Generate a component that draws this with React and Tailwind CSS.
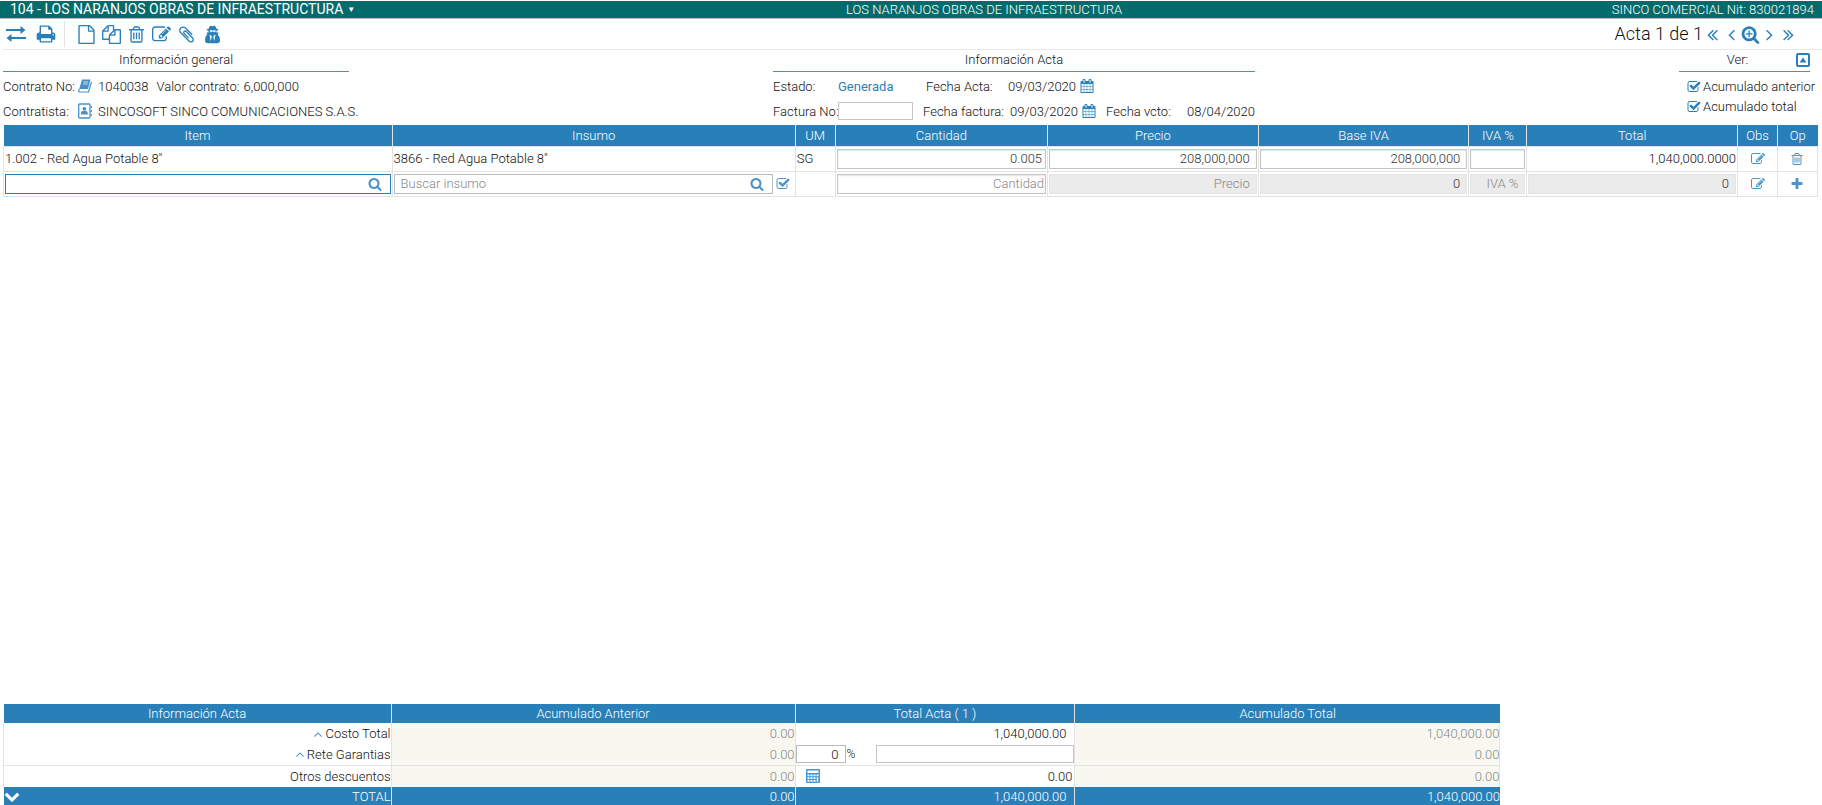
import React, { useState } from "react";

const ICONS = {
  angleLeft:
    "M1203 544q0 13-10 23l-393 393 393 393q10 10 10 23t-10 23l-50 50q-10 10-23 10t-23-10l-466-466q-10-10-10-23t10-23l466-466q10-10 23-10t23 10l50 50q10 10 10 23z",
  angleRight:
    "M1171 960q0 13-10 23l-466 466q-10 10-23 10t-23-10l-50-50q-10-10-10-23t10-23l393-393-393-393q-10-10-10-23t10-23l50-50q10-10 23-10t23 10l466 466q10 10 10 23z",
  angleUp:
    "M1395 1184q0 13-10 23l-50 50q-10 10-23 10t-23-10l-393-393-393 393q-10 10-23 10t-23-10l-50-50q-10-10-10-23t10-23l466-466q10-10 23-10t23 10l466 466q10 10 10 23z",
  doubleLeft:
    "M1011 1376q0 13-10 23l-50 50q-10 10-23 10t-23-10l-466-466q-10-10-10-23t10-23l466-466q10-10 23-10t23 10l50 50q10 10 10 23t-10 23l-393 393 393 393q10 10 10 23zm384 0q0 13-10 23l-50 50q-10 10-23 10t-23-10l-466-466q-10-10-10-23t10-23l466-466q10-10 23-10t23 10l50 50q10 10 10 23t-10 23l-393 393 393 393q10 10 10 23z",
  doubleRight:
    "M979 960q0 13-10 23l-466 466q-10 10-23 10t-23-10l-50-50q-10-10-10-23t10-23l393-393-393-393q-10-10-10-23t10-23l50-50q10-10 23-10t23 10l466 466q10 10 10 23zm384 0q0 13-10 23l-466 466q-10 10-23 10t-23-10l-50-50q-10-10-10-23t10-23l393-393-393-393q-10-10-10-23t10-23l50-50q10-10 23-10t23 10l466 466q10 10 10 23z",
  search:
    "M1216 832q0-185-131.5-316.5t-316.5-131.5-316.5 131.5-131.5 316.5 131.5 316.5 316.5 131.5 316.5-131.5 131.5-316.5zm512 832q0 52-38 90t-90 38q-54 0-90-38l-343-342q-179 124-399 124-143 0-273.5-55.5t-225-150-150-225-55.5-273.5 55.5-273.5 150-225 225-150 273.5-55.5 273.5 55.5 225 150 150 225 55.5 273.5q0 220-124 399l343 343q37 37 37 90z",
  searchPlus:
    "M1088 800v64q0 13-9.5 22.5t-22.5 9.5h-224v224q0 13-9.5 22.5t-22.5 9.5h-64q-13 0-22.5-9.5t-9.5-22.5v-224h-224q-13 0-22.5-9.5t-9.5-22.5v-64q0-13 9.5-22.5t22.5-9.5h224v-224q0-13 9.5-22.5t22.5-9.5h64q13 0 22.5 9.5t9.5 22.5v224h224q13 0 22.5 9.5t9.5 22.5zm128 32q0-185-131.5-316.5t-316.5-131.5-316.5 131.5-131.5 316.5 131.5 316.5 316.5 131.5 316.5-131.5 131.5-316.5zm512 832q0 53-37.5 90.5t-90.5 37.5q-54 0-90-38l-343-342q-179 124-399 124-143 0-273.5-55.5t-225-150-150-225-55.5-273.5 55.5-273.5 150-225 225-150 273.5-55.5 273.5 55.5 225 150 150 225 55.5 273.5q0 220-124 399l343 343q37 37 37 90z",
  plus: "M1600 736v192q0 40-28 68t-68 28h-416v416q0 40-28 68t-68 28h-192q-40 0-68-28t-28-68v-416h-416q-40 0-68-28t-28-68v-192q0-40 28-68t68-28h416v-416q0-40 28-68t68-28h192q40 0 68 28t28 68v416h416q40 0 68 28t28 68z",
  trash:
    "M704 736v576q0 14-9 23t-23 9h-64q-14 0-23-9t-9-23v-576q0-14 9-23t23-9h64q14 0 23 9t9 23zm256 0v576q0 14-9 23t-23 9h-64q-14 0-23-9t-9-23v-576q0-14 9-23t23-9h64q14 0 23 9t9 23zm256 0v576q0 14-9 23t-23 9h-64q-14 0-23-9t-9-23v-576q0-14 9-23t23-9h64q14 0 23 9t9 23zm128 724v-948h-896v948q0 22 7 40.5t14.5 27 10.5 8.5h832q3 0 10.5-8.5t14.5-27 7-40.5zm-672-1076h448l-48-117q-7-9-17-11h-317q-10 2-17 11zm928 32v64q0 14-9 23t-23 9h-96v948q0 83-47 143.5t-113 60.5h-832q-66 0-113-58.5t-47-141.5v-952h-96q-14 0-23-9t-9-23v-64q0-14 9-23t23-9h309l70-167q15-37 54-63t79-26h320q40 0 79 26t54 63l70 167h309q14 0 23 9t9 23z",
  edit: "M888 1184l116-116-152-152-116 116v56h96v96h56zm440-720q-16-16-33 1l-350 350q-17 17-1 33t33-1l350-350q17-17 1-33zm80 594v190q0 119-84.5 203.5t-203.5 84.5h-832q-119 0-203.5-84.5t-84.5-203.5v-832q0-119 84.5-203.5t203.5-84.5h832q63 0 117 25 15 7 18 23 3 17-9 29l-49 49q-14 14-32 8-23-6-45-6h-832q-66 0-113 47t-47 113v832q0 66 47 113t113 47h832q66 0 113-47t47-113v-126q0-13 9-22l64-64q15-15 35-7t20 29zm-96-738l288 288-672 672h-288v-288zm444 132l-92 92-288-288 92-92q28-28 68-28t68 28l152 152q28 28 28 68t-28 68z",
  check:
    "M1472 930v318q0 119-84.5 203.5t-203.5 84.5h-832q-119 0-203.5-84.5t-84.5-203.5v-832q0-119 84.5-203.5t203.5-84.5h832q63 0 117 25 15 7 18 23 3 17-9 29l-49 49q-10 10-23 10-3 0-9-2-23-6-45-6h-832q-66 0-113 47t-47 113v832q0 66 47 113t113 47h832q66 0 113-47t47-113v-254q0-13 9-22l64-64q10-10 23-10 6 0 12 3 20 8 20 29zm231-489l-814 814q-24 24-57 24t-57-24l-430-430q-24-24-24-57t24-57l110-110q24-24 57-24t57 24l263 263 647-647q24-24 57-24t57 24l110 110q24 24 24 57t-24 57z",
  file: "M1596 380q28 28 48 76t20 88v1152q0 40-28 68t-68 28h-1344q-40 0-68-28t-28-68v-1600q0-40 28-68t68-28h896q40 0 88 20t76 48zm-444-244v376h376q-10-29-22-41l-313-313q-12-12-41-22zm384 1528v-1024h-416q-40 0-68-28t-28-68v-416h-768v1536h1280z",
  files:
    "M1696 384q40 0 68 28t28 68v1216q0 40-28 68t-68 28h-960q-40 0-68-28t-28-68v-288h-544q-40 0-68-28t-28-68v-672q0-40 20-88t48-76l408-408q28-28 76-48t88-20h416q40 0 68 28t28 68v328q68-40 128-40h416zm-544 213l-299 299h299v-299zm-640-384l-299 299h299v-299zm196 647l316-316v-416h-384v416q0 40-28 68t-68 28h-416v640h512v-256q0-40 20-88t48-76zm956 804v-1152h-384v416q0 40-28 68t-68 28h-416v640h896z",
  print:
    "M448 1536h896v-256h-896v256zm0-640h896v-384h-160q-40 0-68-28t-28-68v-160h-640v640zm1152 64q0-26-19-45t-45-19-45 19-19 45 19 45 45 19 45-19 19-45zm128 0v416q0 13-9.5 22.5t-22.5 9.5h-224v160q0 40-28 68t-68 28h-960q-40 0-68-28t-28-68v-160h-224q-13 0-22.5-9.5t-9.5-22.5v-416q0-79 56.5-135.5t135.5-56.5h64v-544q0-40 28-68t68-28h672q40 0 88 20t76 48l152 152q28 28 48 76t20 88v256h64q79 0 135.5 56.5t56.5 135.5z",
  calendar:
    "M192 1664h288v-288h-288v288zm352 0h320v-288h-320v288zm-352-352h288v-320h-288v320zm352 0h320v-320h-320v320zm-352-384h288v-288h-288v288zm736 736h320v-288h-320v288zm-384-736h320v-288h-320v288zm768 736h288v-288h-288v288zm-384-352h320v-320h-320v320zm-352-864v-288q0-13-9.5-22.5t-22.5-9.5h-64q-13 0-22.5 9.5t-9.5 22.5v288q0 13 9.5 22.5t22.5 9.5h64q13 0 22.5-9.5t9.5-22.5zm736 864h288v-320h-288v320zm-384-384h320v-288h-320v288zm384 0h288v-288h-288v288zm32-480v-288q0-13-9.5-22.5t-22.5-9.5h-64q-13 0-22.5 9.5t-9.5 22.5v288q0 13 9.5 22.5t22.5 9.5h64q13 0 22.5-9.5t9.5-22.5zm384-64v1280q0 52-38 90t-90 38h-1408q-52 0-90-38t-38-90v-1280q0-52 38-90t90-38h128v-96q0-66 47-113t113-47h64q66 0 113 47t47 113v96h384v-96q0-66 47-113t113-47h64q66 0 113 47t47 113v96h128q52 0 90 38t38 90z",
  chevronDown:
    "M1683 808l-742 741q-19 19-45 19t-45-19l-742-741q-19-19-19-45.5t19-45.5l166-165q19-19 45-19t45 19l531 531 531-531q19-19 45-19t45 19l166 165q19 19 19 45.5t-19 45.5z",
  paperclip:
    "M1596 1385q0 117-79 196t-196 79q-135 0-235-100l-777-776q-113-115-113-271 0-159 110-270t269-111q158 0 273 113l605 606q10 10 10 22 0 16-30.5 46.5t-46.5 30.5q-13 0-23-10l-606-607q-79-77-181-77-106 0-179 75t-73 181q0 105 76 181l776 777q63 63 145 63 64 0 106-42t42-106q0-82-63-145l-581-581q-26-24-60-24-29 0-48 19t-19 48q0 32 25 59l410 410q10 10 10 22 0 16-31 47t-47 31q-12 0-22-10l-410-410q-63-61-63-149 0-82 57-139t139-57q88 0 149 63l581 581q100 98 100 235z",
  secret:
    "M832 1536l96-448-96-128-128-64zm320 0l128-640-128 64-96 128zm153-1026q-2-4-4-6-10-8-96-8-70 0-167 19-7 2-21 2t-21-2q-97-19-167-19-86 0-96 8-2 2-4 6 2 18 4 27 2 3 7.5 6.5t7.5 10.5q2 4 7.5 20.5t7 20.5 7.5 17 8.5 17 9 14 12 13.5 14 9.5 17.5 8 20.5 4 24.5 2q36 0 59-12.5t32.5-30 14.5-34.5 11.5-29.5 17.5-12.5h12q11 0 17.5 12.5t11.5 29.5 14.5 34.5 32.5 30 59 12.5q13 0 24.5-2t20.5-4 17.5-8 14-9.5 12-13.5 9-14 8.5-17 7.5-17 7-20.5 7.5-20.5q2-7 7.5-10.5t7.5-6.5q2-9 4-27zm391 961q0 121-73 190t-194 69h-874q-121 0-194-69t-73-190q0-61 4.5-118t19-125.5 37.5-123.5 63.5-103.5 93.5-74.5l-90-220h214q-22-64-22-128 0-12 2-32-194-40-194-96 0-57 210-99 17-62 51.5-134t70.5-114q32-37 76-37 30 0 84 31t84 31 84-31 84-31q44 0 76 37 36 42 70.5 114t51.5 134q210 42 210 99 0 56-194 96 7 81-20 160h214l-82 225q63 33 107.5 96.5t65.5 143.5 29 151.5 8 148.5z",
};

function Icon({ name, className = "size-4" }) {
  return (
    <svg viewBox="0 0 1792 1792" fill="currentColor" className={className} aria-hidden="true">
      <path d={ICONS[name]} />
    </svg>
  );
}

function ExchangeIcon() {
  return (
    <svg viewBox="0 0 20 16" fill="currentColor" className="h-4 w-5" aria-hidden="true">
      <path d="M0 3h14.5V0L19.500 4l-5 4V5H0zM20 11H5.500V8L.5 12l5 4v-3H20z" />
    </svg>
  );
}

function BookIcon() {
  return (
    <svg viewBox="0 0 14 14" className="size-3.5" aria-hidden="true">
      <path d="M4 .5h8.500L10 10H1.200z" fill="currentColor" />
      <path d="M5.500 3h4.500M5 5h4.500" stroke="#fff" strokeWidth=".7" />
      <path d="M1.200 10Q0 13 2 13h8.500l3-10" fill="none" stroke="currentColor" strokeWidth="1.200" />
    </svg>
  );
}

function AddressBookIcon() {
  return (
    <svg viewBox="0 0 14 16" className="h-4 w-3.5" aria-hidden="true">
      <rect x=".7" y="1" width="11.300" height="14" rx="1" fill="none" stroke="currentColor" strokeWidth="1.300" />
      <circle cx="6.400" cy="5.800" r="1.900" fill="currentColor" />
      <path d="M3 11.500V10q0-2 2-2h2.800q2 0 2 2v1.500z" fill="currentColor" />
      <path d="M13.300 3v2M13.300 7v2M13.300 11v2" stroke="currentColor" strokeWidth="1.200" />
    </svg>
  );
}

function CalculatorIcon() {
  return (
    <svg viewBox="0 0 14 14" className="size-3.5" aria-hidden="true">
      <rect width="14" height="14" rx="1" fill="currentColor" />
      <path
        d="M1.500 1.500h11v2.500h-11zM1.500 5.500h2v1.700h-2zM4.500 5.500h2v1.700h-2zM7.500 5.500h2v1.700h-2zM10.500 5.500h2v1.700h-2zM1.500 8.200h2v1.700h-2zM4.500 8.200h2v1.700h-2zM7.500 8.200h2v1.700h-2zM1.500 11h2v1.700h-2zM4.500 11h2v1.700h-2zM7.500 11h2v1.700h-2zM10.700 8.200h1.600v4.500h-1.600z"
        fill="#fff"
      />
    </svg>
  );
}

function CollapseIcon() {
  return (
    <svg viewBox="0 0 14 14" className="size-3.5" aria-hidden="true">
      <rect x="1" y="1" width="12" height="12" rx="1" fill="none" stroke="currentColor" strokeWidth="2" />
      <path d="M3.500 9.500 7 4.500l3.500 5z" fill="currentColor" />
    </svg>
  );
}

function CheckBox({ id, label, className = "text-[#2980b9]" }) {
  const [checked, setChecked] = useState(true);
  return (
    <label htmlFor={id} className="flex items-center gap-0.5">
      <input
        id={id}
        type="checkbox"
        aria-label={label || "Incluir insumo"}
        checked={checked}
        onChange={() => setChecked(!checked)}
        className="sr-only"
      />
      <span className={className}>
        <Icon name="check" className="size-3.5" />
      </span>
      {label}
    </label>
  );
}

function IconButton({ label, children, className = "" }) {
  return (
    <button type="button" aria-label={label} className={`flex shrink-0 items-center justify-center ${className}`}>
      {children}
    </button>
  );
}

const field =
  "block h-5 w-full min-w-0 border border-[#c5c5c5] bg-white px-1.5 text-right text-[#333] shadow-[inset_0_1px_2px_rgba(0,0,0,0.1)] placeholder:text-[#888]";
const disabledField =
  "block h-5 w-full min-w-0 border border-[#e4e4e4] bg-[#ebebeb] px-1.5 text-right text-[#333] placeholder:text-[#888]";
const th = "border-l border-[#e3e3e3] bg-[#2980b9] p-0 text-center font-light text-white first:border-l-0";
const td = "border border-[#e3e3e3] px-px py-0";

function ActaTable() {
  return (
    <table className="w-full table-fixed border-collapse">
      <colgroup>
        <col className="w-[21.4%]" />
        <col className="w-[22.2%]" />
        <col className="w-[2.2%]" />
        <col className="w-[11.7%]" />
        <col className="w-[11.6%]" />
        <col className="w-[11.6%]" />
        <col className="w-[3.2%]" />
        <col className="w-[11.6%]" />
        <col className="w-[2.2%]" />
        <col className="w-[2.2%]" />
      </colgroup>
      <thead>
        <tr className="h-[21px]">
          {["Item", "Insumo", "UM", "Cantidad", "Precio", "Base IVA", "IVA %", "Total", "Obs", "Op"].map((h) => (
            <th key={h} scope="col" className={th}>
              {h}
            </th>
          ))}
        </tr>
      </thead>
      <tbody>
        <tr className="h-[25px]">
          <td className={td}>1.002 - Red Agua Potable 8"</td>
          <td className={td}>3866 - Red Agua Potable 8"</td>
          <td className={td}>SG</td>
          <td className={td}>
            <input aria-label="Cantidad" defaultValue="0.005" className={`${field} pr-[3px]`} />
          </td>
          <td className={td}>
            <input aria-label="Precio" defaultValue="208,000,000" className={field} />
          </td>
          <td className={td}>
            <input aria-label="Base IVA" defaultValue="208,000,000" className={field} />
          </td>
          <td className={td}>
            <input aria-label="IVA %" className={field} />
          </td>
          <td className={`${td} text-right`}>1,040,000.0000</td>
          <td className={td}>
            <IconButton label="Observaciones" className="w-full text-[#4a96cc]">
              <Icon name="edit" className="size-3.5" />
            </IconButton>
          </td>
          <td className={td}>
            <IconButton label="Eliminar" className="w-full text-[#4a96cc]">
              <Icon name="trash" className="size-3.5" />
            </IconButton>
          </td>
        </tr>
        <tr className="h-[25px]">
          <td className={td}>
            <div className="flex h-5 items-center border border-[#2980b9] bg-white pr-2">
              <input aria-label="Buscar item" className="h-full min-w-0 flex-1 px-1.5 outline-none" />
              <IconButton label="Buscar item" className="text-[#4a90c8]">
                <Icon name="search" className="size-3.5" />
              </IconButton>
            </div>
          </td>
          <td className={td}>
            <div className="flex items-center gap-[3px] pr-1">
              <div className="flex h-5 min-w-0 flex-1 items-center border border-[#b5bcc4] bg-white pr-2">
                <input
                  aria-label="Buscar insumo"
                  placeholder="Buscar insumo"
                  className="h-full min-w-0 flex-1 px-1.5 outline-none placeholder:text-[#888]"
                />
                <IconButton label="Buscar insumo" className="text-[#4a90c8]">
                  <Icon name="search" className="size-3.5" />
                </IconButton>
              </div>
              <CheckBox id="insumo-check" className="text-[#4a96cc]" />
            </div>
          </td>
          <td className={td}></td>
          <td className={td}>
            <input aria-label="Nueva cantidad" placeholder="Cantidad" className={`${field} pr-px`} />
          </td>
          <td className={td}>
            <input aria-label="Nuevo precio" placeholder="Precio" disabled className={disabledField} />
          </td>
          <td className={td}>
            <input aria-label="Nueva base IVA" defaultValue="0" disabled className={disabledField} />
          </td>
          <td className={td}>
            <input aria-label="Nuevo IVA %" placeholder="IVA %" disabled className={disabledField} />
          </td>
          <td className={td}>
            <input aria-label="Nuevo total" defaultValue="0" disabled className={disabledField} />
          </td>
          <td className={td}>
            <IconButton label="Observaciones" className="w-full text-[#4a96cc]">
              <Icon name="edit" className="size-3.5" />
            </IconButton>
          </td>
          <td className={td}>
            <IconButton label="Agregar" className="w-full text-[#4a96cc]">
              <Icon name="plus" className="size-3.5" />
            </IconButton>
          </td>
        </tr>
      </tbody>
    </table>
  );
}

function TotalsTable() {
  const muted = "border-x border-[#e3e3e3] bg-[#f8f8f1] p-0 text-right text-[#888]";
  const plain = "border-x border-[#e3e3e3] p-0 text-right";
  return (
    <table className="w-[82.5%] table-fixed border-collapse">
      <colgroup>
        <col className="w-[25.9%]" />
        <col className="w-[27%]" />
        <col className="w-[18.7%]" />
        <col className="w-[28.4%]" />
      </colgroup>
      <thead>
        <tr className="h-[19px]">
          {["Información Acta", "Acumulado Anterior", "Total Acta ( 1 )", "Acumulado Total"].map((h) => (
            <th key={h} scope="col" className={th}>
              {h}
            </th>
          ))}
        </tr>
      </thead>
      <tbody>
        <tr className="h-[21px]">
          <td className={plain}>
            <div className="flex items-center justify-end">
              <Icon name="angleUp" className="size-3.5 text-[#4a96cc]" />
              Costo Total
            </div>
          </td>
          <td className={muted}>0.00</td>
          <td className={`${plain} pr-2`}>1,040,000.00</td>
          <td className={muted}>1,040,000.00</td>
        </tr>
        <tr className="h-[21px]">
          <td className={plain}>
            <div className="flex items-center justify-end">
              <Icon name="angleUp" className="size-3.5 text-[#4a96cc]" />
              Rete Garantias
            </div>
          </td>
          <td className={muted}>0.00</td>
          <td className={plain}>
            <div className="flex items-center">
              <input
                aria-label="Porcentaje rete garantias"
                defaultValue="0"
                className="h-[18px] w-[50px] shrink-0 border border-[#b5bcc4] bg-white px-1.5 text-right"
              />
              <span className="px-px text-xs">%</span>
              <input
                aria-label="Valor rete garantias"
                className="ml-5 h-[18px] min-w-0 flex-1 border border-[#c5c5c5] bg-white px-1.5 text-right"
              />
            </div>
          </td>
          <td className={muted}>0.00</td>
        </tr>
        <tr className="h-[22px] border-t border-[#e3e3e3]">
          <td className={plain}>Otros descuentos</td>
          <td className={muted}>0.00</td>
          <td className={plain}>
            <div className="flex items-center justify-between pr-0.5 pl-2.5">
              <IconButton label="Calcular descuentos" className="text-[#4a96cc]">
                <CalculatorIcon />
              </IconButton>
              <span>0.00</span>
            </div>
          </td>
          <td className={muted}>0.00</td>
        </tr>
        <tr className="h-[18px] bg-[#2980b9] text-right text-white">
          <td className="p-0">
            <div className="flex items-center justify-between">
              <IconButton label="Contraer totales">
                <Icon name="chevronDown" className="size-4" />
              </IconButton>
              TOTAL
            </div>
          </td>
          <td className="border-l border-[#e3e3e3] p-0">0.00</td>
          <td className="border-l border-[#e3e3e3] p-0 pr-2">1,040,000.00</td>
          <td className="border-l border-[#e3e3e3] p-0">1,040,000.00</td>
        </tr>
      </tbody>
    </table>
  );
}

export default function App() {
  return (
    <div className="flex min-h-screen flex-col bg-white pt-px font-['Roboto',sans-serif] text-[13px] leading-[17px] font-light whitespace-nowrap text-[#111]">
      <header className="grid h-[18px] grid-cols-[40%_28%_1fr] items-center border-b border-[#bbb] bg-[#046b6c] pr-2 pl-2.5 text-white">
        <button type="button" className="flex items-center gap-1 text-left text-sm leading-[17px] font-normal">
          104 - LOS NARANJOS OBRAS DE INFRAESTRUCTURA <span className="text-[8px]">▼</span>
        </button>
        <span className="text-center">LOS NARANJOS OBRAS DE INFRAESTRUCTURA</span>
        <span className="text-right">SINCO COMERCIAL Nit: 830021894</span>
      </header>

      <nav className="ml-[3px] flex h-[31px] items-center justify-between border-b border-[#e8e8e8] pr-6 pl-[3px] text-[#2980b9]">
        <div className="flex items-center">
          <IconButton label="Cambiar">
            <ExchangeIcon />
          </IconButton>
          <IconButton label="Imprimir" className="ml-2.5">
            <Icon name="print" className="size-5" />
          </IconButton>
          <div className="ml-2 h-[26px] border-l border-[#e3e3e3]" />
          <div className="ml-3 flex items-center gap-1.5">
            <IconButton label="Nuevo">
              <Icon name="file" className="size-[19px]" />
            </IconButton>
            <IconButton label="Copiar">
              <Icon name="files" className="size-[19px]" />
            </IconButton>
            <IconButton label="Eliminar">
              <Icon name="trash" className="size-[19px]" />
            </IconButton>
            <IconButton label="Editar">
              <Icon name="edit" className="size-[19px]" />
            </IconButton>
            <IconButton label="Adjuntar">
              <Icon name="paperclip" className="size-[19px]" />
            </IconButton>
            <IconButton label="Auditoria">
              <Icon name="secret" className="size-[19px]" />
            </IconButton>
          </div>
        </div>
        <div className="flex items-center">
          <span className="text-lg text-[#111]">Acta 1 de 1</span>
          <IconButton label="Primera">
            <Icon name="doubleLeft" className="size-[19px]" />
          </IconButton>
          <IconButton label="Anterior">
            <Icon name="angleLeft" className="size-[19px]" />
          </IconButton>
          <IconButton label="Buscar acta">
            <Icon name="searchPlus" className="size-[19px]" />
          </IconButton>
          <IconButton label="Siguiente">
            <Icon name="angleRight" className="size-[19px]" />
          </IconButton>
          <IconButton label="Ultima">
            <Icon name="doubleRight" className="size-[19px]" />
          </IconButton>
        </div>
      </nav>

      <main className="flex flex-1 flex-col pr-1 pl-[3px]">
        <div className="flex justify-between pr-2">
          <section className="w-[346px]">
            <h2 className="h-[22px] border-b border-[#4a90c8] pt-px text-center">Información general</h2>
            <div className="flex h-7 items-center">
              <span className="w-[75px]">Contrato No:</span>
              <IconButton label="Ver contrato" className="text-[#4a90c8]">
                <BookIcon />
              </IconButton>
              <span className="ml-1.5">1040038</span>
              <span className="ml-2">Valor contrato:</span>
              <span className="ml-1">6,000,000</span>
            </div>
            <div className="flex h-[22px] items-center">
              <span className="w-[75px] shrink-0">Contratista:</span>
              <IconButton label="Ver contratista" className="text-[#4a90c8]">
                <AddressBookIcon />
              </IconButton>
              <span className="ml-1.5">SINCOSOFT SINCO COMUNICACIONES S.A.S.</span>
            </div>
          </section>

          <section className="w-[482px]">
            <h2 className="h-[22px] border-b border-[#4a90c8] pt-px text-center">Información Acta</h2>
            <div className="flex h-7 items-center">
              <span className="w-[65px]">Estado:</span>
              <span className="w-[88px] font-normal text-[#2980b9]">Generada</span>
              <span className="w-[82px]">Fecha Acta:</span>
              <span>09/03/2020</span>
              <IconButton label="Elegir fecha acta" className="ml-1 text-[#2980b9]">
                <Icon name="calendar" className="size-3.5" />
              </IconButton>
            </div>
            <div className="flex h-[22px] items-center">
              <label htmlFor="factura" className="w-[65px] shrink-0">
                Factura No:
              </label>
              <input id="factura" className="h-[18px] w-[75px] border border-[#c5c5c5] px-1" />
              <span className="ml-2.5 w-[87px]">Fecha factura:</span>
              <span>09/03/2020</span>
              <IconButton label="Elegir fecha factura" className="ml-1 text-[#2980b9]">
                <Icon name="calendar" className="size-3.5" />
              </IconButton>
              <span className="ml-2.5">Fecha vcto:</span>
              <span className="ml-auto">08/04/2020</span>
            </div>
          </section>

          <section className="w-[131px]">
            <div className="flex h-[22px] items-center justify-between border-b border-[#4a90c8] pb-0.5">
              <h2 className="flex-1 text-center">Ver:</h2>
              <IconButton label="Contraer" className="text-[#2980b9]">
                <CollapseIcon />
              </IconButton>
            </div>
            <div className="mt-1.5 flex flex-col gap-[3px] pl-2">
              <CheckBox id="acumulado-anterior" label="Acumulado anterior" />
              <CheckBox id="acumulado-total" label="Acumulado total" />
            </div>
          </section>
        </div>

        <div className="mt-[3px]">
          <ActaTable />
        </div>
        <div className="mt-auto">
          <TotalsTable />
        </div>
      </main>
    </div>
  );
}
